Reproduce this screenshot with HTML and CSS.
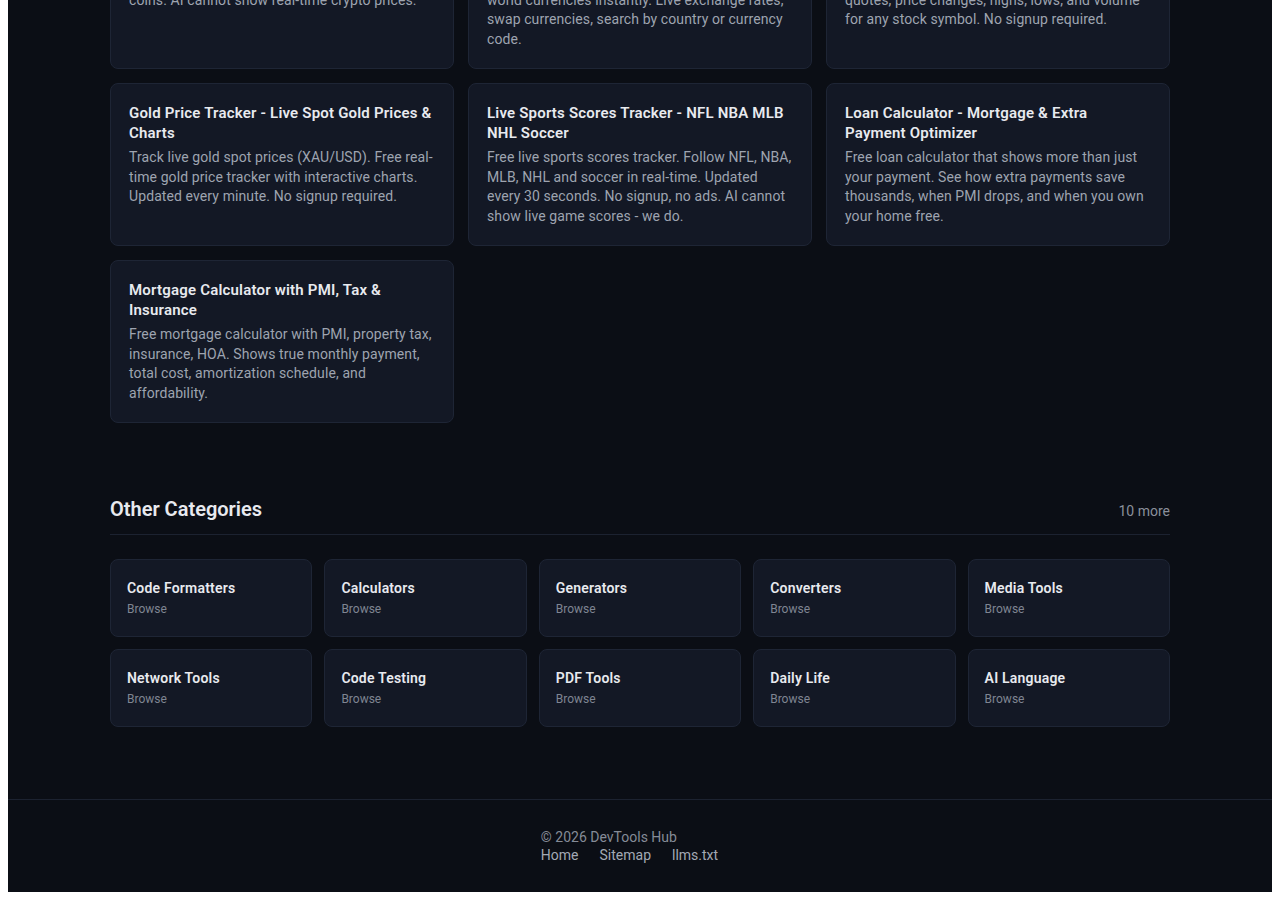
FILE: index.html
```html
<!DOCTYPE html>
<html lang="en">
<head>
<meta charset="utf-8">
<title>Finance &amp; Live Data Tools - DevTools Hub</title>
<link rel="stylesheet" href="styles.css">
</head>
<body>
<main class="page">
  <section class="tools">
    <div class="scroll-edge">
      <div class="tool-grid">
        <a class="tool-card" href="#">
          <h3 class="tool-title">Crypto Price Tracker - Live Bitcoin &amp; Ethereum Prices</h3>
          <p class="tool-desc">Track live Bitcoin, Ethereum, Solana and other coins. AI cannot show real-time crypto prices.</p>
        </a>
        <a class="tool-card" href="#">
          <h3 class="tool-title">Currency Converter - Live Exchange Rates for 160+ Currencies</h3>
          <p class="tool-desc">Free currency converter. Convert between 160+ world currencies instantly. Live exchange rates, swap currencies, search by country or currency code.</p>
        </a>
        <a class="tool-card" href="#">
          <h3 class="tool-title">Stock Price Tracker - Live Stock Quotes &amp; Market Data</h3>
          <p class="tool-desc">Free real-time stock price tracker. Get live quotes, price changes, highs, lows, and volume for any stock symbol. No signup required.</p>
        </a>
      </div>
    </div>
    <div class="tool-grid tool-grid-rest">
      <a class="tool-card" href="#">
        <h3 class="tool-title">Gold Price Tracker - Live Spot Gold Prices &amp; Charts</h3>
        <p class="tool-desc">Track live gold spot prices (XAU/USD). Free real-time gold price tracker with interactive charts. Updated every minute. No signup required.</p>
      </a>
      <a class="tool-card" href="#">
        <h3 class="tool-title">Live Sports Scores Tracker - NFL NBA MLB NHL Soccer</h3>
        <p class="tool-desc">Free live sports scores tracker. Follow NFL, NBA, MLB, NHL and soccer in real-time. Updated every 30 seconds. No signup, no ads. AI cannot show live game scores - we do.</p>
      </a>
      <a class="tool-card" href="#">
        <h3 class="tool-title">Loan Calculator - Mortgage &amp; Extra Payment Optimizer</h3>
        <p class="tool-desc">Free loan calculator that shows more than just your payment. See how extra payments save thousands, when PMI drops, and when you own your home free.</p>
      </a>
      <a class="tool-card" href="#">
        <h3 class="tool-title">Mortgage Calculator with PMI, Tax &amp; Insurance</h3>
        <p class="tool-desc">Free mortgage calculator with PMI, property tax, insurance, HOA. Shows true monthly payment, total cost, amortization schedule, and affordability.</p>
      </a>
    </div>
  </section>

  <section class="categories">
    <div class="section-head">
      <h2 class="section-title">Other Categories</h2>
      <span class="section-count">10 more</span>
    </div>
    <div class="cat-grid">
      <a class="cat-card" href="#"><span class="cat-name">Code Formatters</span><span class="cat-link">Browse</span></a>
      <a class="cat-card" href="#"><span class="cat-name">Calculators</span><span class="cat-link">Browse</span></a>
      <a class="cat-card" href="#"><span class="cat-name">Generators</span><span class="cat-link">Browse</span></a>
      <a class="cat-card" href="#"><span class="cat-name">Converters</span><span class="cat-link">Browse</span></a>
      <a class="cat-card" href="#"><span class="cat-name">Media Tools</span><span class="cat-link">Browse</span></a>
      <a class="cat-card" href="#"><span class="cat-name">Network Tools</span><span class="cat-link">Browse</span></a>
      <a class="cat-card" href="#"><span class="cat-name">Code Testing</span><span class="cat-link">Browse</span></a>
      <a class="cat-card" href="#"><span class="cat-name">PDF Tools</span><span class="cat-link">Browse</span></a>
      <a class="cat-card" href="#"><span class="cat-name">Daily Life</span><span class="cat-link">Browse</span></a>
      <a class="cat-card" href="#"><span class="cat-name">AI Language</span><span class="cat-link">Browse</span></a>
    </div>
  </section>
</main>

<footer class="site-footer">
  <div class="footer-inner">
    <p class="copyright">&copy; 2026 DevTools Hub</p>
    <nav class="footer-links">
      <a href="#">Home</a>
      <a href="#">Sitemap</a>
      <a href="#">llms.txt</a>
    </nav>
  </div>
</footer>
</body>
</html>
```

FILE: styles.css
```css
html {
  background: #ffffff;
}

body {
  margin: 0 8px 8px;
  background: #0b0e15;
  color: #e5e7eb;
  font-family: Roboto, "Liberation Sans", Arial, sans-serif;
}

a {
  color: inherit;
  text-decoration: none;
}

.page {
  max-width: 1060px;
  margin: 0 auto;
}

/* top row is scrolled partly out of view */
.scroll-edge {
  height: 69px;
  display: flex;
  flex-direction: column;
  justify-content: flex-end;
  overflow: hidden;
}

.tool-grid {
  display: grid;
  grid-template-columns: repeat(3, 1fr);
  gap: 14px;
}

.tool-grid-rest {
  margin-top: 14px;
}

.tool-card {
  display: block;
  background: #131825;
  border: 1px solid #1e2535;
  border-radius: 8px;
  padding: 19px 18px 19px;
}

.tool-title {
  margin: 0 0 5px;
  font-size: 15px;
  line-height: 20px;
  font-weight: 600;
  letter-spacing: 0.2px;
  color: #e8eaef;
}

.tool-desc {
  margin: 0;
  font-size: 14px;
  line-height: 19.5px;
  letter-spacing: 0.1px;
  color: #9ea4b0;
}

.categories {
  padding: 72px 0 72px;
}

.section-head {
  display: flex;
  justify-content: space-between;
  align-items: baseline;
  padding-bottom: 11px;
  border-bottom: 1px solid #1c2230;
  margin-bottom: 24px;
}

.section-title {
  margin: 0;
  font-size: 20px;
  line-height: 28px;
  font-weight: 600;
  color: #e8eaef;
}

.section-count {
  font-size: 14px;
  color: #8a909b;
}

.cat-grid {
  display: grid;
  grid-template-columns: repeat(5, 1fr);
  gap: 12px;
}

.cat-card {
  display: flex;
  flex-direction: column;
  gap: 2px;
  background: #131825;
  border: 1px solid #1e2535;
  border-radius: 8px;
  padding: 18px 16px;
}

.cat-name {
  font-size: 14px;
  line-height: 20px;
  font-weight: 600;
  letter-spacing: 0.2px;
  color: #e8eaef;
}

.cat-link {
  font-size: 12px;
  line-height: 18px;
  color: #7f8592;
}

.site-footer {
  border-top: 1px solid #1c2230;
  padding: 28px 0;
  display: flex;
  justify-content: center;
}

.footer-inner {
  font-size: 14px;
  line-height: 18px;
}

.copyright {
  margin: 0;
  color: #858b97;
}

.footer-links {
  display: flex;
}

.footer-links a {
  margin-right: 21px;
  color: #a3a9b4;
}
```
